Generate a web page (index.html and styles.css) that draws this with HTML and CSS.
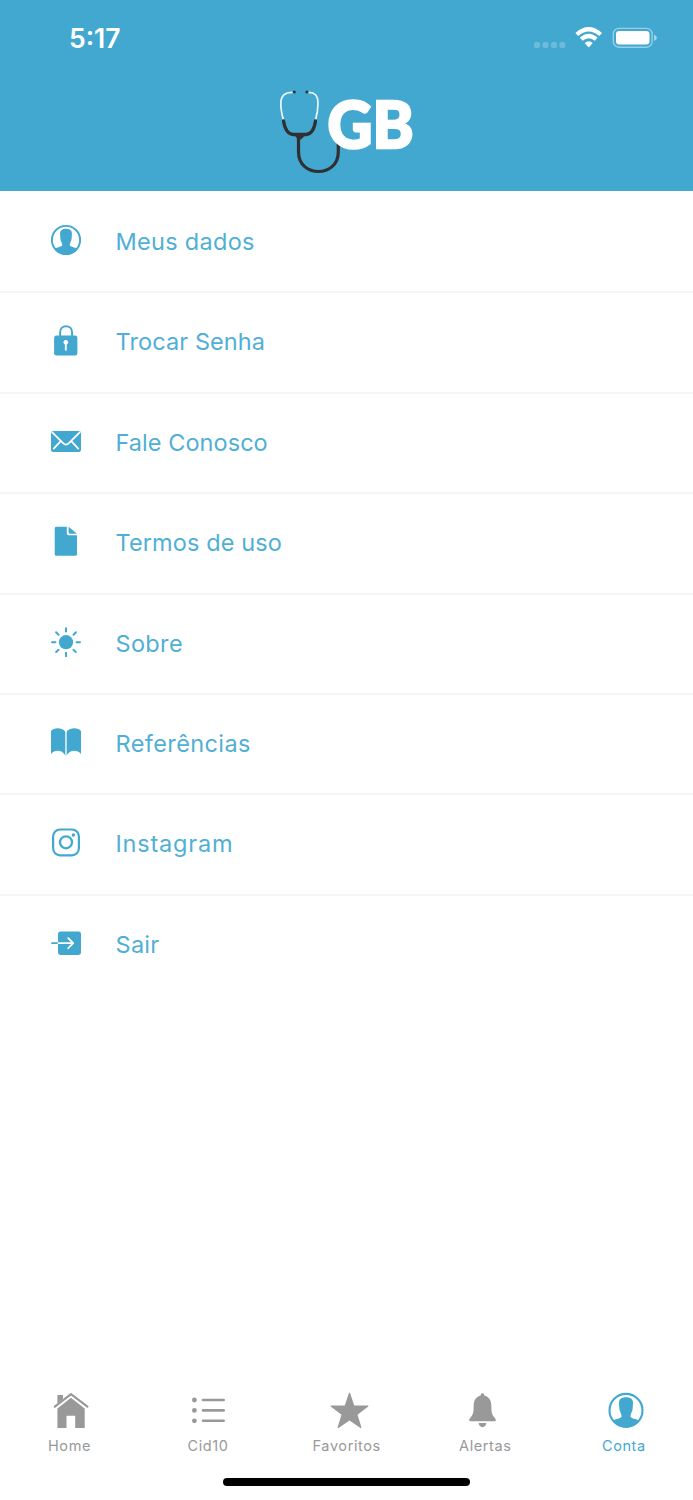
FILE: index.html
```html
<!DOCTYPE html>
<html lang="pt-BR">
<head>
    <meta charset="UTF-8">
    <meta name="viewport" content="width=device-width, initial-scale=1.0">
    <title>GB - Conta</title>
    <link rel="stylesheet" href="styles.css">
</head>
<body>
    <header>
        <div class="status-bar">
            <span class="time">5:17</span>
            <svg class="status-icons" width="124" height="24" viewBox="0 0 124 24">
                <g fill="#fff" opacity=".22">
                    <rect x="0" y="16" width="6" height="6" rx="2"/>
                    <rect x="8.5" y="16" width="6" height="6" rx="2"/>
                    <rect x="17" y="16" width="6" height="6" rx="2"/>
                    <rect x="25.3" y="16" width="6" height="6" rx="2"/>
                </g>
                <g fill="none" stroke="#fff" stroke-width="4.2">
                    <path d="M42.8 8.5Q54.7-2 66.6 8.5"/>
                    <path d="M47.2 13.2Q54.7 6.8 62.2 13.2"/>
                </g>
                <path d="M50.7 17Q54.7 13.7 58.7 17L54.7 21.6Z" fill="#fff"/>
                <rect x="79.3" y="2.4" width="38.8" height="18.8" rx="5.5" fill="none" stroke="#fff" stroke-width="1.4" opacity=".45"/>
                <rect x="82" y="5" width="33.5" height="13.6" rx="3.3" fill="#fff"/>
                <path d="M120 8.5q2.9 1.2 2.9 3.3t-2.9 3.3z" fill="#fff" opacity=".5"/>
            </svg>
        </div>
        <svg class="logo" width="140" height="90" viewBox="0 0 140 90">
            <g fill="none" stroke-linecap="round">
                <path d="M17.5 6.5C9 5.5 5 10 4.8 17C4.7 24 6 29 7.5 34M31 6.5C39 5.5 42 10 42 17C42 24 41 29 39.5 34" stroke="#e9f7fc" stroke-width="1.7"/>
                <path d="M7.5 35C9 44 12 48 17 48.5H30C36 48 38.5 42 39.5 35" stroke="#303033" stroke-width="3.3"/>
                <path d="M22.5 50V66C22.5 92 62.3 92 62.3 66V56" stroke="#303033" stroke-width="3.2"/>
            </g>
            <path d="M17 47.5h14l-6 6h-3z" fill="#303033"/>
            <circle cx="18.2" cy="6" r="1.6" fill="#26343c"/>
            <circle cx="31" cy="6" r="1.6" fill="#26343c"/>
            <text class="logo-text" x="51.5" y="62" textLength="86" lengthAdjust="spacingAndGlyphs">GB</text>
        </svg>
    </header>

    <main>
        <ul class="menu">
            <li>
                <svg viewBox="0 0 30 30">
                    <circle class="line" cx="15" cy="15" r="14.1" stroke-width="1.9"/>
                    <path d="M15 3.8C11 3.8 9 5.5 9.1 8.5L9.3 13C9.5 16 11 17.5 11.3 20C11 22 6 22 3.6 24C9 31.5 21 31.5 26.4 24C24 22 19 22 18.7 20C19 17.5 20.5 16 20.7 13L20.9 8.5C21 5.5 19 3.8 15 3.8Z"/>
                </svg>
                <span class="t-dados">Meus dados</span>
            </li>
            <li>
                <svg viewBox="0 0 30 30">
                    <rect x="3.1" y="10.6" width="23.3" height="20" rx="2.3"/>
                    <path class="line" d="M9.1 11V7.5C9.1-.8 21.1-.8 21.1 7.5V11" stroke-width="2"/>
                    <circle class="white" cx="14.8" cy="17.2" r="2.3"/>
                    <path class="cut" d="M14.8 17V24.8" stroke-width="1.9"/>
                </svg>
                <span class="t-senha">Trocar Senha</span>
            </li>
            <li>
                <svg viewBox="0 0 30 30">
                    <rect y="4.9" width="30" height="21" rx="1.8"/>
                    <path class="cut" d="M1 6.2L12.1 17.1Q15 20 17.9 17.1L29 6.2M2.7 22.6L9.5 15.3M27.3 22.6L20.5 15.3" stroke-width="1.7"/>
                </svg>
                <span class="t-fale">Fale Conosco</span>
            </li>
            <li>
                <svg viewBox="0 0 30 30">
                    <path d="M5.2.8H15.8V7.5Q15.8 9.3 17.6 9.3H26V28.3Q26 29.8 24.5 29.8H5.2Q3.7 29.8 3.7 28.3V2.3Q3.7.8 5.2.8ZM17.6.8L26 7.7H19Q17.6 7.7 17.6 6.3Z"/>
                </svg>
                <span class="t-termos">Termos de uso</span>
            </li>
            <li>
                <svg viewBox="0 0 30 30">
                    <circle cx="15" cy="15.2" r="7.1"/>
                    <path class="line" d="M15 1.2V4.6M15 25.8V29.2M1 15.2H4.4M25.6 15.2H29M5.1 5.3L7.5 7.7M22.5 22.7L24.9 25.1M5.1 25.1L7.5 22.7M22.5 7.7L24.9 5.3" stroke-width="2"/>
                </svg>
                <span class="t-sobre">Sobre</span>
            </li>
            <li>
                <svg viewBox="0 0 30 30">
                    <path d="M0 4C3-.2 11 .6 14 4V28C11 22.5 3.5 22.5 0 27ZM30 4C27-.2 19 .6 15.9 4V28C19 22.5 26.5 22.5 30 27Z"/>
                    <path d="M14 5H15.9V28.7H14Z" opacity=".3"/>
                </svg>
                <span class="t-refs">Referências</span>
            </li>
            <li>
                <svg viewBox="0 0 30 30">
                    <rect class="line" x="2.1" y="2.5" width="25.8" height="25.8" rx="7" stroke-width="2.2"/>
                    <circle class="line" cx="15" cy="15.3" r="6" stroke-width="2.3"/>
                    <circle cx="22.4" cy="8" r="1.7"/>
                </svg>
                <span class="t-insta">Instagram</span>
            </li>
            <li>
                <svg viewBox="0 0 30 30">
                    <rect x="7" y="3.5" width="23" height="23.4" rx="2.4"/>
                    <path class="line" d="M1 15.2H7" stroke-width="1.8"/>
                    <path class="cut" d="M7.5 15.2H22M17.2 10.2L22.2 15.2L17.2 20.2" stroke-width="1.8"/>
                </svg>
                <span class="t-sair">Sair</span>
            </li>
        </ul>
    </main>

    <nav class="tabs">
        <div class="tab">
            <svg viewBox="0 0 44 36">
                <path d="M24 4.8L37.7 15.6V35H28.2V22.7H19.5V35H10.4V15.6Z"/>
                <path d="M10.4 2H16V6L10.4 10.5Z"/>
                <path class="line" d="M7.8 13.7L24 1.1L40.4 13.7" stroke-width="2.2"/>
            </svg>
            <span>Home</span>
        </div>
        <div class="tab">
            <svg viewBox="0 0 44 36">
                <circle cx="8.4" cy="7" r="2.4"/>
                <circle cx="8.4" cy="17.4" r="2.4"/>
                <circle cx="8.4" cy="27.8" r="2.4"/>
                <path class="line" d="M17 7H37.7M17 17.4H37.7M17 27.8H37.7" stroke-width="2.6"/>
            </svg>
            <span>Cid10</span>
        </div>
        <div class="tab">
            <svg viewBox="0 0 44 36">
                <path class="star" d="M25.5.3L29.8 13.1H43.9L32.8 21.5L36.8 34.5L25.5 26.7L14.2 34.5L18.2 21.5L7.1 13.1H21.2Z"/>
            </svg>
            <span>Favoritos</span>
        </div>
        <div class="tab">
            <svg viewBox="0 0 44 36">
                <path d="M19.5.3C18.2.3 17.8 1.2 17.7 2.5C13.5 3.5 10.8 7 10.7 12C10.6 18 10.5 21 8 24C6.7 25.5 6.2 26 6.2 27Q6.2 28.2 7.5 28.2H31.5Q32.8 28.2 32.8 27C32.8 26 32.3 25.5 31 24C28.5 21 28.4 18 28.3 12C28.2 7 25.5 3.5 21.3 2.5C21.2 1.2 20.8.3 19.5.3ZM15.6 30H23.4C23 35.5 16 35.5 15.6 30Z"/>
            </svg>
            <span>Alertas</span>
        </div>
        <div class="tab active">
            <svg viewBox="0 0 44 36">
                <circle class="line" cx="24" cy="17.4" r="16.5" stroke-width="2.1"/>
                <path d="M24 4.2C19.3 4.2 16.9 6.3 17 9.8L17.3 15C17.5 18.6 19.3 20.3 19.6 23.2C19.3 25.6 13.4 25.6 10.7 28C17 36.7 31 36.7 37.3 28C34.6 25.6 28.7 25.6 28.4 23.2C28.7 20.3 30.5 18.6 30.7 15L31 9.8C31.1 6.3 28.7 4.2 24 4.2Z"/>
            </svg>
            <span>Conta</span>
        </div>
    </nav>
    <div class="home-indicator"></div>
</body>
</html>
```
FILE: styles.css
```css
body {
    font-family: Inter, Arial, sans-serif;
    margin: 0;
    background-color: #fff;
    display: flex;
    flex-direction: column;
    height: 1500px;
    overflow: hidden;
}

header {
    background-color: #42a8d0;
    height: 191px;
    flex-shrink: 0;
    display: flex;
    flex-direction: column;
    align-items: center;
}

.status-bar {
    align-self: stretch;
    display: flex;
    justify-content: space-between;
    padding: 26px 35px 0 69px;
    height: 60px;
}

.time {
    color: #fff;
    font-size: 26.5px;
    font-weight: 600;
    line-height: 25px;
}

.logo {
    margin-left: -1px;
    overflow: visible;
}

.logo-text {
    font-family: Lato, sans-serif;
    font-weight: 900;
    font-size: 64px;
    fill: #fff;
    stroke: #fff;
    stroke-width: 2.5px;
}

/* Menu */
.menu {
    list-style: none;
    margin: 0;
    padding: 2px 0 0;
    color: #42a8d0;
}

.menu li {
    box-sizing: border-box;
    height: 100.4px;
    padding: 32px 51px 0;
    display: flex;
    align-items: flex-start;
    gap: 34.5px;
    border-bottom: 2px solid #f5f5f5;
}

.menu li:last-child {
    border-bottom: none;
}

.menu svg {
    width: 30px;
    height: 30px;
    overflow: visible;
}

.menu span {
    font-size: 23.5px;
    line-height: 34px;
    color: #50afd5;
    white-space: nowrap;
}

.t-dados { letter-spacing: 0.3px; }
.t-senha { letter-spacing: 0.1px; }
.t-fale { letter-spacing: 0.05px; }
.t-termos { letter-spacing: 0.1px; }
.t-sobre { letter-spacing: 0.35px; }
.t-refs { letter-spacing: 0.4px; }
.t-insta { letter-spacing: 0.8px; }
.t-sair { letter-spacing: 0.3px; }

svg {
    fill: currentColor;
}

.line {
    fill: none;
    stroke: currentColor;
    stroke-linecap: round;
    stroke-linejoin: round;
}

.cut {
    fill: none;
    stroke: #fff;
    stroke-linecap: round;
    stroke-linejoin: round;
}

.white {
    fill: #fff;
}

.star {
    stroke: currentColor;
    stroke-width: 1.2px;
    stroke-linejoin: round;
}

/* Barra inferior */
.tabs {
    margin-top: auto;
    height: 85px;
    flex-shrink: 0;
    display: flex;
    color: #999;
}

.tab {
    flex: 1;
    display: flex;
    flex-direction: column;
    align-items: center;
    gap: 7px;
}

.tab svg {
    width: 44px;
    height: 36px;
    overflow: visible;
}

.tab span {
    font-size: 14.5px;
    line-height: 20px;
    letter-spacing: 0.6px;
    padding-left: 0.4px;
}

.tab.active {
    color: #42a8d0;
}

.home-indicator {
    width: 247px;
    height: 8px;
    border-radius: 4px;
    background-color: #000;
    margin: 0 auto 14px;
    flex-shrink: 0;
}
```
